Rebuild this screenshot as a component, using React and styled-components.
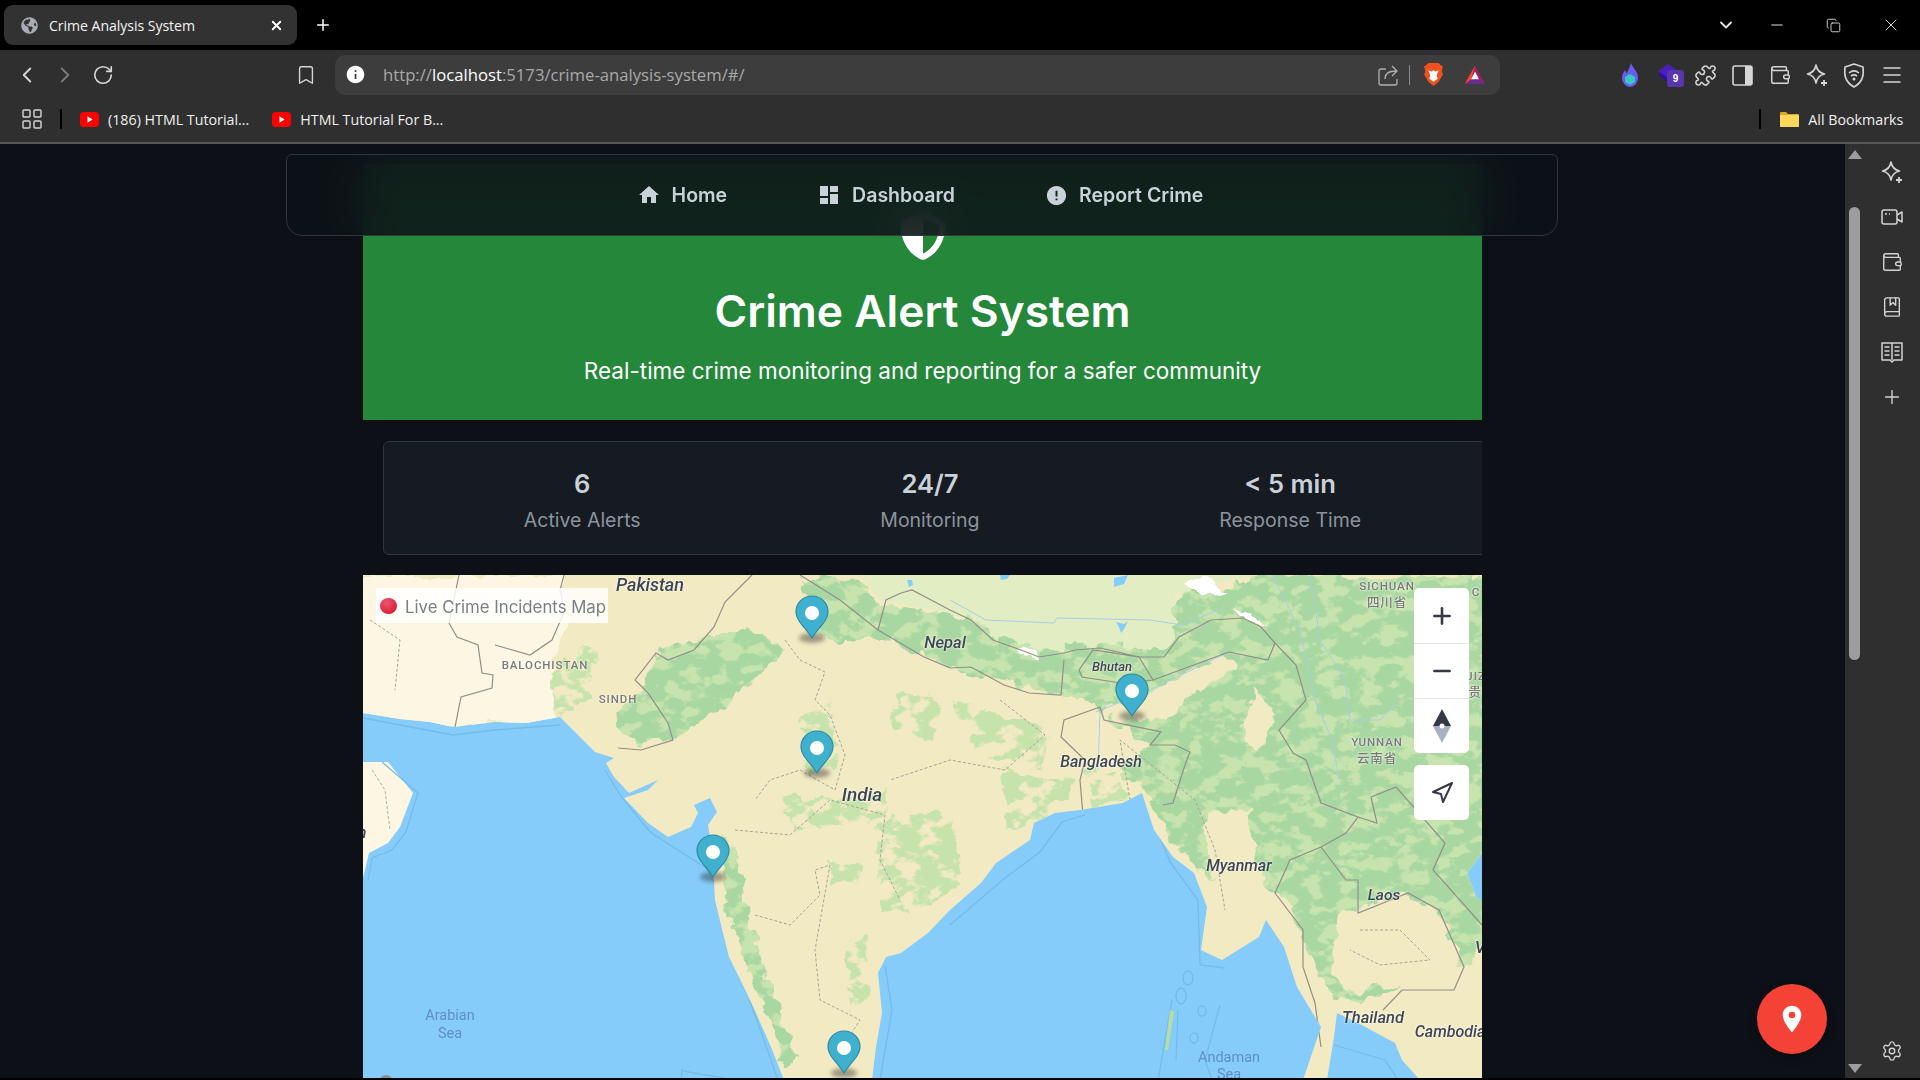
import React from 'react';
import styled, { createGlobalStyle } from 'styled-components';
import { ChevronLeft, ChevronRight, ChevronDown, RotateCw, Bookmark, Puzzle, Wallet, Menu, Minus, Plus, X, Copy, BookMarked, Settings, Navigation, LayoutGrid } from 'lucide-react';
import { MdHome, MdDashboard, MdError, MdPlace, MdInfo } from 'react-icons/md';
import { FaGlobeAmericas } from 'react-icons/fa';
import { FaShieldHalved } from 'react-icons/fa6';

const Global = createGlobalStyle`
  html, body { margin: 0; padding: 0; height: 100%; overflow: hidden; background: #000; }
  * { box-sizing: border-box; }
`;

const Shell = styled.div`
  width: 1920px; height: 1080px; display: flex; flex-direction: column; background: #000; overflow: hidden;
  font-family: "Open Sans", "Liberation Sans", sans-serif;
`;
const TabStrip = styled.div`height: 50px; display: flex; align-items: center; padding-left: 4px; color: #fff;`;
const Tab = styled.div`
  width: 293px; height: 40px; background: #323232; border-radius: 9px; display: flex; align-items: center;
  padding: 0 13px 0 17px; font-size: 14.1px; letter-spacing: -0.05px; color: #f2f2f2;
`;
const TabTitle = styled.span`margin-left: 11px; flex: 1; white-space: nowrap;`;
const NewTab = styled.div`margin-left: 17px; display: flex;`;
const WindowControls = styled.div`margin-left: auto; display: flex; align-items: center; color: #e4e4e4;`;
const WinSlot = styled.div`width: ${p => p.$w}px; display: flex; justify-content: center; align-items: center;`;

const Toolbar = styled.div`height: 50px; background: #2f2f2f; display: flex; align-items: center; padding-left: 8px; color: #d6d6d6;`;
const Slot = styled.div`
  width: ${p => p.$w}px; margin-left: ${p => p.$ml || 0}px; flex: none; display: flex; justify-content: center; align-items: center;
  color: ${p => p.$c || 'inherit'}; position: relative;
`;
const UrlBar = styled.div`
  width: 1165px; margin-left: 9px; height: 40px; flex: none; background: #3d3d3d; border-radius: 10px; display: flex; align-items: center;
  padding: 0 0 1px 9px; font-size: 16.7px; color: #a9a9a9; font-family: "Open Sans", sans-serif;
`;
const UrlText = styled.span`margin-left: 17px; white-space: nowrap;`;
const UrlHost = styled.span`color: #fff;`;
const UrlRight = styled.div`margin-left: auto; display: flex; align-items: center; padding-right: 15px;`;
const UrlDivider = styled.div`width: 1px; height: 20px; background: #8a8a8a; margin: 0 13px 0 11px;`;
const ExtBadge = styled.span`
  position: absolute; left: 19px; top: 6px; width: 17px; height: 17px; background: #5a35b0; border-radius: 3px; color: #fff;
  font: 700 10px "Liberation Sans", sans-serif; display: flex; align-items: center; justify-content: center;
`;

const BookmarkBar = styled.div`
  height: 44px; background: #2f2f2f; border-bottom: 2px solid #565656; display: flex; align-items: center; padding: 0 0 4px 20px;
  font-size: 14.25px; color: #f0f0f0;
`;
const BarDivider = styled.div`width: 2px; height: 20px; background: #000; margin-left: ${p => p.$ml}px;`;
const BookmarkItem = styled.div`display: flex; align-items: center; gap: 9px; margin-left: ${p => p.$ml}px; white-space: nowrap;`;

const Main = styled.div`height: 934px; display: flex; position: relative; overflow: hidden;`;
const Page = styled.main`
  width: 1845px; flex: none; background: #0d1117; padding-top: 20px; position: relative; overflow: hidden; font-family: Inter, sans-serif;
`;
const TopNav = styled.nav`
  position: absolute; left: 286px; top: 10px; width: 1272px; height: 82px; z-index: 5; padding-right: 4px;
  display: flex; align-items: center; justify-content: center; gap: 90px;
  background: rgba(13, 17, 23, 0.86); backdrop-filter: blur(20px); border: 1px solid #30363d; border-radius: 6px 6px 16px 16px;
`;
const NavItem = styled.a`display: flex; align-items: center; gap: 11px; color: #c9d1d9; font-size: 19.5px; font-weight: 600; white-space: nowrap;`;
const Container = styled.div`width: 1119px; margin: 0 auto; overflow: hidden;`;
const Hero = styled.header`
  background: #25873a; color: #fff; height: 256px; padding-top: 48px; display: flex; flex-direction: column; align-items: center;
`;
const HeroTitle = styled.h1`margin: 22px 0 0; font-size: 44.4px; line-height: 58px; font-weight: 600;`;
const HeroSub = styled.p`margin: 14px 0 0; font-size: 22.5px; line-height: 34px; font-weight: 400;`;
const Stats = styled.section`
  width: 1119px; margin: 21px 0 0 20px; height: 114px; padding: 5px 20px 0; background: #161b22; border: 1px solid #30363d; border-radius: 6px;
  display: flex; justify-content: space-around; align-items: center;
`;
const Stat = styled.div`display: flex; flex-direction: column; align-items: center; gap: 8px;`;
const StatValue = styled.div`font-size: 25.6px; line-height: 31px; font-weight: 600; color: #c9d1d9;`;
const StatLabel = styled.div`font-size: 19.5px; line-height: 27px; color: #8b949e;`;

const MapBox = styled.section`margin-top: 20px; height: 600px; position: relative; overflow: hidden; background: #86ccfa;`;
const MapArt = styled.svg`display: block; position: absolute; left: 0; top: 0;`;
const MapLabel = styled.span`
  position: absolute; left: ${p => p.$x - 363}px; top: ${p => p.$y - 575}px; transform: translate(-50%, -50%);
  font-family: Roboto, "Noto Sans CJK SC", sans-serif; white-space: nowrap; line-height: 1;
  font-size: ${p => p.$s || 16}px;
  font-style: ${p => (p.$kind === 'country' ? 'italic' : 'normal')};
  font-weight: ${p => (p.$kind === 'country' ? 500 : p.$kind === 'state' ? 500 : 400)};
  letter-spacing: ${p => (p.$kind === 'state' ? '0.9px' : '0')};
  color: ${p => (p.$kind === 'sea' ? '#5f8fc6' : p.$kind === 'state' ? '#7a7a74' : '#3f4651')};
  text-shadow: ${p => (p.$kind === 'sea' ? 'none' : '0 0 2px rgba(255,255,255,.85), 0 0 3px rgba(255,255,255,.6)')};
`;
const PinWrap = styled.div`position: absolute; left: ${p => p.$x - 363 - 17}px; top: ${p => p.$y - 575 - 43}px; width: 34px; height: 50px;`;
const PinShadow = styled.div`
  position: absolute; left: 4px; top: 38px; width: 26px; height: 10px; border-radius: 50%; background: rgba(40, 40, 40, 0.42); filter: blur(2px);
`;
const PinArt = styled.svg`position: absolute; left: 0; top: 0;`;
const Legend = styled.div`
  position: absolute; left: 13px; top: 13px; height: 35px; width: 232px; padding: 3px 0 0 4px; background: rgba(255, 255, 255, 0.82);
  display: flex; align-items: center; gap: 8px; font-size: 16.8px; color: #7b8087; white-space: nowrap;
`;
const LegendDot = styled.span`
  width: 17px; height: 16px; margin-top: -3px; border-radius: 50%; flex: none; background: radial-gradient(circle at 40% 30%, #f0566f, #d81f3c 75%);
`;
const Controls = styled.div`position: absolute; right: 13px; top: 13px; width: 55px; display: flex; flex-direction: column; gap: 12px;`;
const ControlGroup = styled.div`background: #fff; border-radius: 5px; overflow: hidden;`;
const ControlBtn = styled.div`
  height: 55px; display: flex; align-items: center; justify-content: center; color: #333a45;
  & + & { border-top: 1px solid #e6e6e6; }
`;
const AttrBit = styled.div`position: absolute; left: 16px; top: 500px; width: 14px; height: 14px; border-radius: 50%; background: #8a8f94;`;
const Fab = styled.button`
  position: absolute; right: 18px; bottom: 24px; width: 70px; height: 70px; border-radius: 50%; border: 0; background: #f44336; color: #fff;
  display: flex; align-items: center; justify-content: center; padding: 0; box-shadow: 0 4px 10px rgba(0,0,0,.3); z-index: 6;
`;

const Rail = styled.aside`flex: 1; background: #2f2f2f; display: flex; position: relative;`;
const Scroll = styled.div`width: 20px; flex: none; position: relative;`;
const ScrollThumb = styled.div`position: absolute; left: 4px; top: 63px; width: 11px; height: 453px; border-radius: 6px; background: #9d9d9d;`;
const ScrollArrow = styled.div`
  position: absolute; left: 3px; ${p => (p.$down ? 'bottom: 5px;' : 'top: 6px;')} width: 0; height: 0;
  border-left: 7px solid transparent; border-right: 7px solid transparent;
  ${p => (p.$down ? 'border-top: 9px solid #9d9d9d;' : 'border-bottom: 9px solid #9d9d9d;')}
`;
const SideIcons = styled.div`flex: 1; display: flex; flex-direction: column; align-items: center; color: #d4d4d4; padding-top: 5px; padding-right: 1px;`;
const SideIcon = styled.div`height: 45px; flex: none; display: flex; align-items: center; justify-content: center;`;
const SideBottom = styled.div`margin-top: auto; margin-bottom: 16px; display: flex;`;

const coast = '1490,575 1490,853 1482,853 1467,873 1476,897 1484,903 1490,1080 1420,1080 1402,1060 1395,1043 1358,1023 1337,1013 1334,1037 1327,1080 1303,1080 1321,1027 1297,987 1284,947 1266,920 1259,937 1222,960 1201,950 1207,907 1194,873 1173,857 1154,830 1142,793 1123,803 1080,810 1055,813 1034,823 1030,840 996,863 981,883 950,910 928,933 901,953 886,957 878,973 882,1013 876,1047 872,1080 784,1080 771,1047 756,1013 742,983 729,957 723,933 715,900 714,883 712,850 708,825 717,812 710,798 694,805 698,813 691,827 668,837 648,823 624,798 648,790 658,780 629,793 614,777 606,763 614,758 595,752 583,740 570,727 560,717 526,723 495,722 453,727 430,722 400,719 363,713 355,713 355,575';
const oman = '355,762 388,762 413,793 400,827 388,843 369,853 363,878 355,878';

const dense = [
  '1175,637 1175,597 1262,578 1490,575 1490,930 1470,962 1440,985 1400,985 1360,1000 1335,1000 1312,960 1292,905 1262,880 1247,812 1204,812 1215,880 1190,860 1165,830 1150,795 1120,772 1150,745 1110,722 1095,700 1060,695 1000,680 950,668 885,640 820,640 802,578 860,580 880,605 950,612 971,618 993,635 1021,645 1039,650 1064,648 1100,644 1139,650 1164,650',
  '660,650 748,628 784,650 745,690 702,722 675,740 640,745 612,722 640,690',
  '722,835 735,850 750,925 770,985 795,1055 785,1070 762,1000 740,950 725,900',
];
const patches = [
  '565,640 595,650 590,700 557,718 550,680',
  '782,795 830,800 886,790 890,815 850,825 790,830',
  '874,827 950,800 960,880 935,905 885,915',
  '828,863 863,866 860,882 830,885',
  '844,940 866,935 868,1000 850,1012',
  '802,713 832,705 838,770 806,772',
  '955,700 1000,715 1050,730 1040,770 975,750',
  '1085,770 1120,770 1130,800 1090,805',
  '1000,770 1080,780 1060,810 1010,830',
  '900,690 940,700 935,740 890,730',
];

const tan = [
  '1100,712 1150,692 1226,655 1240,668 1190,695 1170,720 1112,718',
  '1204,810 1247,812 1262,880 1255,918 1225,922 1215,880',
  '1340,915 1400,893 1440,915 1462,965 1450,985 1395,985 1352,990 1330,975',
  '1255,690 1275,720 1260,750 1240,730',
];

const borders = [
  '459,575 449,623 457,637 478,645 482,673 493,675 492,688 461,697 455,727',
  '564,575 560,590 565,610 552,640 530,655 495,645',
  '752,575 740,587 725,602 714,627 694,650 668,660 656,653 635,680 648,693 668,723 673,740 641,750 618,748',
  '800,575 840,600 878,630 886,600 901,593 912,590 950,610 971,620 993,640 1021,650 1039,657 1064,653 1075,650 1100,648 1139,657 1164,657 1179,637 1211,620 1243,618 1261,627 1275,643 1296,665 1306,700 1279,730 1293,753 1306,760 1321,803 1358,817 1346,833 1321,847 1290,860 1275,893 1303,930 1303,967 1315,1003 1321,1047',
  '878,630 924,657 950,668 971,667 1004,685 1029,693 1061,695 1064,660',
  '1079,670 1093,650 1139,657 1153,680 1121,683 1082,677 1079,670',
  '1100,707 1104,720 1161,732 1150,745 1175,745 1190,752 1185,765 1173,803 1163,805',
  '1100,707 1064,720 1061,737 1085,760 1080,780 1083,815',
  '1153,680 1229,652 1268,660 1275,643',
  '1358,817 1377,823 1371,797 1396,787 1445,843 1433,870 1482,925',
  '1321,847 1346,880 1358,880 1358,913 1408,893 1439,910 1464,967 1454,990 1402,990 1383,1010',
];
const stateLines = [
  '785,640 800,660 825,672 815,700 830,715 845,755 835,790 800,770 770,780 755,800',
  '735,830 790,835 830,800 885,815 880,860 900,900',
  '755,915 790,925 820,895 815,870 830,865 815,950 820,1000 860,1020 835,1060',
  '370,620 400,640 395,690',
  '1130,800 1120,740 1195,800 1215,850 1225,910',
  '1360,930 1400,930 1430,960 1380,965 1350,950',
  '1000,700 1045,735 1005,770 950,760 890,780',
];
const water = [
  '363,718 453,735 495,730 560,725',
  '605,770 620,795 650,832 706,868 718,890 735,960 748,995 778,1080',
  '950,925 1005,878 1040,852 1062,822 1085,815',
  '1155,825 1170,862 1198,900 1200,965 1225,968',
  '885,965 892,1010 880,1080',
  '681,1080 682,1070 688,1072 735,1080',
  '1220,1005 1205,1060 1212,1080',
  '1310,1080 1328,1040',
  '1334,1045 1385,1060 1398,1080',
];
const rivers = [
  '950,600 986,620 1054,623 1057,618 1150,620 1182,625 1218,610',
  '1096,712 1150,690 1229,652',
  '1272,575 1300,630 1315,700 1330,735 1340,780',
  '1310,575 1320,640 1345,680 1350,720 1380,720 1400,700',
  '1100,712 1098,770',
];
const labels = [
  ['Pakistan', 650, 585, 18, 'country'],
  ['BALOCHISTAN', 545, 666, 11.5, 'state'],
  ['SINDH', 618, 700, 11.5, 'state'],
  ['Nepal', 945, 643, 16.5, 'country'],
  ['Bhutan', 1112, 666, 13, 'country'],
  ['Bangladesh', 1101, 762, 16, 'country'],
  ['India', 862, 794, 19, 'country'],
  ['Myanmar', 1239, 866, 16, 'country'],
  ['Laos', 1384, 896, 15.5, 'country'],
  ['Thailand', 1373, 1018, 16.5, 'country'],
  ['Cambodia', 1450, 1032, 16, 'country'],
  ['Arabian', 450, 1016, 14.5, 'sea'],
  ['Sea', 450, 1034, 14.5, 'sea'],
  ['Andaman', 1229, 1058, 14.5, 'sea'],
  ['Sea', 1229, 1075, 14.5, 'sea'],
  ['SICHUAN', 1387, 587, 11.5, 'state'],
  ['四川省', 1387, 603, 12.5, 'state'],
  ['YUNNAN', 1377, 743, 11.5, 'state'],
  ['云南省', 1377, 759, 12.5, 'state'],
  ['C', 1476, 593, 11.5, 'state'],
  ['JIZ', 1476, 677, 11.5, 'state'],
  ['贵州', 1482, 693, 12.5, 'state'],
  ['n', 362, 833, 16, 'country'],
  ['V', 1480, 948, 16, 'country'],
];
const pins = [[812, 638], [817, 773], [713, 877], [844, 1073], [1132, 716]];

function MapDrawing() {
  return (
    <MapArt width="1119" height="600" viewBox="363 575 1119 600">
      <defs>
        <clipPath id="land"><polygon points={coast} /></clipPath>
        <filter id="rough" x="-10%" y="-10%" width="120%" height="120%">
          <feTurbulence type="fractalNoise" baseFrequency="0.06" numOctaves="3" seed="4" />
          <feDisplacementMap in="SourceGraphic" scale="18" xChannelSelector="R" yChannelSelector="G" />
        </filter>
        <filter id="mottle" x="0" y="0" width="100%" height="100%">
          <feTurbulence type="fractalNoise" baseFrequency="0.05 0.07" numOctaves="4" seed="11" result="n" />
          <feColorMatrix in="n" type="matrix" values="0 0 0 0 0  0 0 0 0 0  0 0 0 0 0  9 0 0 0 -3.6" result="m" />
          <feComposite in="SourceGraphic" in2="m" operator="in" />
        </filter>
      </defs>
      <rect x="363" y="575" width="1119" height="600" fill="#86ccfa" />
      <g fill="none" stroke="#73bce9" strokeWidth="1.3">
        {water.map(w => <polyline key={w} points={w} />)}
        <ellipse cx="1188" cy="978" rx="5" ry="7" />
        <ellipse cx="1181" cy="996" rx="5" ry="8" />
        <ellipse cx="1202" cy="1011" rx="4" ry="5" />
        <ellipse cx="1194" cy="1038" rx="4" ry="5" />
        <polyline points="1172,1000 1165,1040 1158,1080" />
        <polyline points="1178,1010 1176,1060" />
      </g>
      <polygon points="1170,1010 1174,1012 1168,1050 1165,1050" fill="#b9dca0" />
      <g clipPath="url(#land)">
        <rect x="355" y="575" width="1140" height="600" fill="#f2eac2" />
        <polygon points="355,575 562,575 568,620 552,660 556,725 355,725" fill="#fdf6e3" filter="url(#rough)" />
        <polygon points="860,575 1270,575 1230,580 1175,595 1175,637 1164,657 1139,657 1100,648 1064,653 1039,657 1021,650 993,640 971,620 950,613 880,600" fill="#e2edc4" />
        <g filter="url(#rough)">
          {dense.map(m => <polygon key={m} points={m} fill="#c8e4ae" />)}
        </g>
        <g filter="url(#mottle)">
          {dense.map(m => <polygon key={m} points={m} fill="#a9d7a2" filter="url(#rough)" />)}
        </g>
        <g filter="url(#mottle)">
          {patches.map(m => <polygon key={m} points={m} fill="#c6e3ac" filter="url(#rough)" />)}
        </g>
        <g filter="url(#rough)">
          {tan.map(m => <polygon key={m} points={m} fill="#f2eac2" />)}
          <polygon points="587,665 640,660 632,700 598,735 587,720" fill="#f2eac2" />
          <polygon points="1182,585 1205,578 1225,590 1205,595" fill="#fff" />
          <polygon points="1237,610 1252,615 1268,625 1245,622" fill="#fff" />
          <polygon points="1018,647 1036,650 1040,658 1022,654" fill="#fff" />
        </g>
        <g fill="none" stroke="#a8cfe0" strokeWidth="1">
          {rivers.map(r => <polyline key={r} points={r} />)}
        </g>
        <g fill="none" stroke="#928f88" strokeWidth="1.2">
          {borders.map(b => <polyline key={b} points={b} />)}
        </g>
        <g fill="none" stroke="#a8a29a" strokeWidth="1" strokeDasharray="3 2">
          {stateLines.map(b => <polyline key={b} points={b} />)}
        </g>
        <path d="M1114 578l14-3-4 9-10 3zM1116 622l8 2 4-3-4 8-3 4-2-6zM907 580l5 0 1 5-4 2zM1000 575l10 0-3 4-6 1z" fill="#86ccfa" />
      </g>
      <polygon points={oman} fill="#fdf6e3" />
      <polyline points="382,762 418,793 406,832 392,850 372,858 368,880" fill="none" stroke="#73bce9" strokeWidth="1.3" />
      <polyline points="372,770 385,790 390,830" fill="none" stroke="#b0aca0" strokeWidth="1" strokeDasharray="3 2" />
    </MapArt>
  );
}

function Pin({ x, y }) {
  return (
    <PinWrap $x={x} $y={y}>
      <PinShadow />
      <PinArt width="34" height="44" viewBox="0 0 34 44">
        <path d="M17 1C8 1 1 8 1 17c0 9 10 16 16 26 6-10 16-17 16-26C33 8 26 1 17 1z" fill="#3fb1ce" stroke="#2e8aa3" strokeWidth="1.2" />
        <ellipse cx="17" cy="18" rx="7" ry="7" fill="#fff" />
      </PinArt>
    </PinWrap>
  );
}

const Compass = () => (
  <svg width="20" height="34" viewBox="0 0 20 34">
    <polygon points="10,0 19,17 1,17" fill="#333a45" />
    <polygon points="10,34 19,17 1,17" fill="#aab0c4" />
    <circle cx="10" cy="17" r="2.5" fill="#fff" />
  </svg>
);
const YouTube = () => (
  <svg width="19" height="15" viewBox="0 0 19 15">
    <rect width="19" height="15" rx="4" fill="#f00" />
    <polygon points="7.5,4.2 12.5,7.5 7.5,10.8" fill="#fff" />
  </svg>
);
const Folder = () => (
  <svg width="19" height="17" viewBox="0 0 19 17">
    <path d="M0 2a1 1 0 0 1 1-1h5l2 2h10a1 1 0 0 1 1 1v11a1 1 0 0 1-1 1H1a1 1 0 0 1-1-1z" fill="#d9a92c" />
    <rect y="4" width="19" height="12" rx="1" fill="#fbd75e" />
  </svg>
);
const BraveLogo = () => (
  <svg width="21" height="25" viewBox="0 0 20 24">
    <path d="M5 1h10l2 2 2 1-1 5 1 3-4 7-5 4-5-4-4-7 1-3-1-5 2-1z" fill="#f1501f" />
    <path d="M5 8l3 1 2-1 2 1 3-1-2 5 1 3-4 3-4-3 1-3z" fill="#fff" />
  </svg>
);
const BatLogo = () => (
  <svg width="23" height="22" viewBox="0 0 23 22">
    <polygon points="11.5,0 23,21 0,21" fill="#9e1f63" />
    <polygon points="0,21 23,21 16,16 7,16" fill="#662d91" />
    <polygon points="11.5,0 0,21 7,16" fill="#ff4724" />
    <polygon points="11.5,7 16,16 7,16" fill="#fff" />
  </svg>
);
const Flame = () => (
  <svg width="18" height="25" viewBox="0 0 18 25">
    <path d="M10 0c1 4 7 8 7 15a8 9 0 0 1-16 0c0-4 2-6 3-8 1 2 1 3 2 3 1-3 3-6 4-10z" fill="#6a5cf0" />
    <polygon points="9,11 14,14 14,19 9,22 4,19 4,14" fill="#36c9c0" />
  </svg>
);
const Stack = () => (
  <svg width="22" height="22" viewBox="0 0 22 22">
    <polygon points="11,4 21,11 11,18 1,11" fill="#2b129a" />
    <polygon points="11,0 21,7 11,14 1,7" fill="#4a1fb8" />
  </svg>
);
const PanelIcon = () => (
  <svg width="21" height="21" viewBox="0 0 21 21">
    <rect x="1" y="1" width="19" height="19" rx="2" fill="none" stroke="#d6d6d6" strokeWidth="1.6" />
    <rect x="13" y="1" width="7" height="19" fill="#d6d6d6" />
  </svg>
);
const ShareArrow = () => (
  <svg width="20" height="22" viewBox="0 0 20 22" fill="none" stroke="#b0b0b0" strokeWidth="1.3">
    <path d="M8 5H3a2 2 0 0 0-2 2v12a2 2 0 0 0 2 2h14a2 2 0 0 0 2-2v-4" />
    <path d="M7 15c0-5 4-8 11-8M14 2l5 5-5 5" />
  </svg>
);
const StarPlus = () => (
  <svg width="24" height="24" viewBox="0 0 24 24" fill="none" stroke="currentColor" strokeWidth="1.6" strokeLinejoin="round">
    <path d="M11 2c1 5.500 3.200 8 8.500 9-5.300 1-7.500 3.500-8.500 9-1-5.500-3.200-8-8.500-9 5.300-1 7.500-3.500 8.500-9z" />
    <path d="M19 17v6M16 20h6" strokeWidth="1.8" />
  </svg>
);
const CameraIcon = () => (
  <svg width="22" height="16" viewBox="0 0 22 16" fill="none" stroke="currentColor" strokeWidth="1.5" strokeLinejoin="round">
    <rect x="1" y="1" width="15" height="14" rx="2" />
    <path d="M16 6l5-3v10l-5-3" />
    <path d="M4 5h2M8 5h1" />
  </svg>
);
const OpenBook = () => (
  <svg width="22" height="22" viewBox="0 0 22 22" fill="none" stroke="currentColor" strokeWidth="1.5" strokeLinejoin="round">
    <path d="M1 2h20v17H13l-2 2-2-2H1zM11 2v17" />
    <path d="M3.500 6h5M3.500 10h5M3.500 14h5M13.500 6h5M13.500 10h5M13.500 14h5" />
  </svg>
);
const VpnShield = () => (
  <svg width="22" height="25" viewBox="0 0 22 25" fill="none" stroke="currentColor" strokeWidth="1.6" strokeLinejoin="round">
    <path d="M11 1l9 3c1 8 0 15-9 20C2 19 1 12 2 4z" />
    <path d="M6 10c3-2.500 7-2.500 10 0M8 13c2-1.500 4-1.500 6 0" />
    <circle cx="11" cy="16" r=".7" fill="currentColor" />
  </svg>
);

export default function App() {
  return (
    <Shell>
      <Global />
      <TabStrip>
        <Tab>
          <FaGlobeAmericas size={17} color="#a9adb3" />
          <TabTitle>Crime Analysis System</TabTitle>
          <X size={15} strokeWidth={3} color="#fff" />
        </Tab>
        <NewTab><Plus size={18} strokeWidth={2} /></NewTab>
        <WindowControls>
          <WinSlot $w={45}><ChevronDown size={20} strokeWidth={2.2} /></WinSlot>
          <WinSlot $w={57}><Minus size={18} strokeWidth={1.3} /></WinSlot>
          <WinSlot $w={57}><Copy size={15} strokeWidth={1.4} /></WinSlot>
          <WinSlot $w={58}><X size={20} strokeWidth={1.1} /></WinSlot>
        </WindowControls>
      </TabStrip>
      <Toolbar>
        <Slot $w={38}><ChevronLeft size={26} strokeWidth={1.7} /></Slot>
        <Slot $w={38} $c="#7c7c7c"><ChevronRight size={26} strokeWidth={1.7} /></Slot>
        <Slot $w={37}><RotateCw size={22} strokeWidth={1.8} /></Slot>
        <Slot $w={40} $ml={165}><Bookmark size={22} strokeWidth={1.5} /></Slot>
        <UrlBar>
          <Slot $w={22} $c="#fff"><MdInfo size={21} /></Slot>
          <UrlText>http://<UrlHost>localhost</UrlHost>:5173/crime-analysis-system/#/</UrlText>
          <UrlRight>
            <ShareArrow />
            <UrlDivider />
            <BraveLogo />
            <Slot $w={20} $ml={21}><BatLogo /></Slot>
          </UrlRight>
        </UrlBar>
        <Slot $w={36} $ml={112}><Flame /></Slot>
        <Slot $w={39}><Stack /><ExtBadge>9</ExtBadge></Slot>
        <Slot $w={36}><Puzzle size={23} strokeWidth={1.6} /></Slot>
        <Slot $w={39}><PanelIcon /></Slot>
        <Slot $w={36}><Wallet size={22} strokeWidth={1.6} /></Slot>
        <Slot $w={37}><StarPlus /></Slot>
        <Slot $w={38}><VpnShield /></Slot>
        <Slot $w={38}><Menu size={24} strokeWidth={1.5} /></Slot>
      </Toolbar>
      <BookmarkBar>
        <LayoutGrid size={24} strokeWidth={1.4} color="#d6d6d6" />
        <BarDivider $ml={16} />
        <BookmarkItem $ml={18}><YouTube />(186) HTML Tutorial...</BookmarkItem>
        <BookmarkItem $ml={23}><YouTube />HTML Tutorial For B...</BookmarkItem>
        <BarDivider $ml={1316} />
        <BookmarkItem $ml={19}><Folder />All Bookmarks</BookmarkItem>
      </BookmarkBar>
      <Main>
        <Page>
          <TopNav>
            <NavItem><MdHome size={24} />Home</NavItem>
            <NavItem><MdDashboard size={24} />Dashboard</NavItem>
            <NavItem><MdError size={23} />Report Crime</NavItem>
          </TopNav>
          <Container>
            <Hero>
              <FaShieldHalved size={48} />
              <HeroTitle>Crime Alert System</HeroTitle>
              <HeroSub>Real-time crime monitoring and reporting for a safer community</HeroSub>
            </Hero>
            <Stats>
              <Stat><StatValue>6</StatValue><StatLabel>Active Alerts</StatLabel></Stat>
              <Stat><StatValue>24/7</StatValue><StatLabel>Monitoring</StatLabel></Stat>
              <Stat><StatValue>&lt; 5 min</StatValue><StatLabel>Response Time</StatLabel></Stat>
            </Stats>
            <MapBox>
              <MapDrawing />
              {labels.map(([t, x, y, s, k]) => <MapLabel key={t + x} $x={x} $y={y} $s={s} $kind={k}>{t}</MapLabel>)}
              {pins.map(([x, y]) => <Pin key={x} x={x} y={y} />)}
              <AttrBit />
              <Legend><LegendDot />Live Crime Incidents Map</Legend>
              <Controls>
                <ControlGroup>
                  <ControlBtn><Plus size={26} strokeWidth={2.4} /></ControlBtn>
                  <ControlBtn><Minus size={26} strokeWidth={2.4} /></ControlBtn>
                  <ControlBtn><Compass /></ControlBtn>
                </ControlGroup>
                <ControlGroup>
                  <ControlBtn><Navigation size={24} strokeWidth={2} /></ControlBtn>
                </ControlGroup>
              </Controls>
            </MapBox>
          </Container>
          <Fab><MdPlace size={32} /></Fab>
        </Page>
        <Rail>
          <Scroll>
            <ScrollArrow />
            <ScrollThumb />
            <ScrollArrow $down />
          </Scroll>
          <SideIcons>
            <SideIcon><StarPlus /></SideIcon>
            <SideIcon><CameraIcon /></SideIcon>
            <SideIcon><Wallet size={22} strokeWidth={1.5} /></SideIcon>
            <SideIcon><BookMarked size={22} strokeWidth={1.5} /></SideIcon>
            <SideIcon><OpenBook /></SideIcon>
            <SideIcon><Plus size={22} strokeWidth={1.5} /></SideIcon>
            <SideBottom><Settings size={22} strokeWidth={1.5} /></SideBottom>
          </SideIcons>
        </Rail>
      </Main>
    </Shell>
  );
}
